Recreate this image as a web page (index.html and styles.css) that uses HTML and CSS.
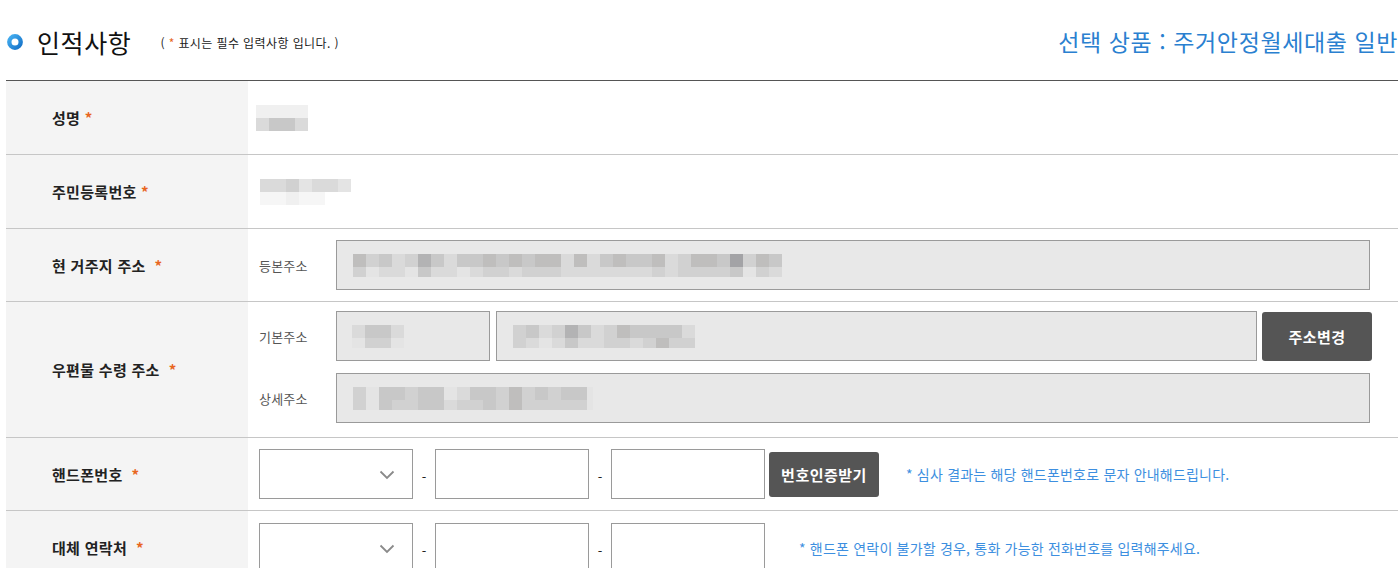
FILE: index.html
```html
<!DOCTYPE html>
<html lang="ko">
<head>
<meta charset="utf-8">
<title>인적사항</title>
<link rel="stylesheet" href="styles.css">
</head>
<body>
<div class="page">
  <header class="head">
    <div class="head-left">
      <svg class="bullet" width="16" height="16" viewBox="0 0 16 16" aria-hidden="true">
        <defs>
          <linearGradient id="bg" x1="0" y1="0" x2="1" y2="1">
            <stop offset="0" stop-color="#44aef0"/>
            <stop offset="1" stop-color="#1673c9"/>
          </linearGradient>
        </defs>
        <circle cx="8" cy="8" r="5.7" fill="none" stroke="url(#bg)" stroke-width="4.4"/>
      </svg>
      <h2 class="title">인적사항</h2>
      <span class="req-note">( <em>*</em> 표시는 필수 입력사항 입니다. )</span>
    </div>
    <div class="product">선택 상품 : 주거안정월세대출 일반</div>
  </header>

  <div class="form">
    <div class="row r1">
      <div class="label">성명 <b class="ast">*</b></div>
      <div class="cell pad-s">
        <div class="mosaic m13">
          <div class="mr"><i class="s1"></i><i class="s1"></i><i class="s1"></i><i class="s1"></i></div>
          <div class="mr"><i class="s3"></i><i class="s5"></i><i class="s5"></i><i class="s3"></i></div>
        </div>
      </div>
    </div>

    <div class="row r2">
      <div class="label">주민등록번호 <b class="ast">*</b></div>
      <div class="cell pad-r">
        <div class="mosaic m13">
          <div class="mr"><i class="s3"></i><i class="s3"></i><i class="s4"></i><i class="s2"></i><i class="s3"></i><i class="s3"></i><i class="s2"></i></div>
          <div class="mr"><i class="s0"></i><i class="s0"></i><i class="s1"></i><i class="s0"></i><i class="s0"></i></div>
        </div>
      </div>
    </div>

    <div class="row r3">
      <div class="label">현 거주지 주소 &nbsp;<b class="ast">*</b></div>
      <div class="cell">
        <div class="line">
          <span class="sub">등본주소</span>
          <div class="box grow">
            <div class="mosaic mx">
              <div class="mr"><i class="s6"></i><i class="s4"></i><i class="s5"></i><i class="s3"></i><i class="s4"></i><i class="s7"></i><i class="s5"></i><i class="s3"></i><i class="s5"></i><i class="s5"></i><i class="s6"></i><i class="s5"></i><i class="s6"></i><i class="s5"></i><i class="s6"></i><i class="s6"></i><i class="s3"></i><i class="s6"></i><i class="s3"></i><i class="s5"></i><i class="s6"></i><i class="s5"></i><i class="s5"></i><i class="s6"></i><i class="s3"></i><i class="s4"></i><i class="s6"></i><i class="s6"></i><i class="s5"></i><i class="s8"></i><i class="s4"></i><i class="s6"></i><i class="s5"></i></div>
              <div class="mr lo"><i class="s4"></i><i class="s2"></i><i class="s3"></i><i class="s3"></i><i class="s2"></i><i class="s5"></i><i class="s3"></i><i class="s3"></i><i class="s2"></i><i class="s3"></i><i class="s4"></i><i class="s4"></i><i class="s3"></i><i class="s4"></i><i class="s4"></i><i class="s4"></i><i class="s3"></i><i class="s3"></i><i class="s3"></i><i class="s3"></i><i class="s3"></i><i class="s3"></i><i class="s3"></i><i class="s4"></i><i class="s3"></i><i class="s4"></i><i class="s4"></i><i class="s4"></i><i class="s4"></i><i class="s5"></i><i class="s2"></i><i class="s4"></i><i class="s3"></i></div>
            </div>
          </div>
        </div>
      </div>
    </div>

    <div class="row r4">
      <div class="label">우편물 수령 주소 &nbsp;<b class="ast">*</b></div>
      <div class="cell col">
        <div class="line">
          <span class="sub">기본주소</span>
          <div class="box zip">
            <div class="mosaic mx">
              <div class="mr"><i class="s3"></i><i class="s5"></i><i class="s5"></i><i class="s3"></i></div>
              <div class="mr lo"><i class="s2"></i><i class="s4"></i><i class="s4"></i><i class="s2"></i></div>
            </div>
          </div>
          <div class="box grow">
            <div class="mosaic mx">
              <div class="mr"><i class="s4"></i><i class="s5"></i><i class="s3"></i><i class="s4"></i><i class="s7"></i><i class="s5"></i><i class="s3"></i><i class="s4"></i><i class="s6"></i><i class="s5"></i><i class="s5"></i><i class="s5"></i><i class="s5"></i><i class="s3"></i></div>
              <div class="mr lo"><i class="s4"></i><i class="s3"></i><i class="s2"></i><i class="s3"></i><i class="s5"></i><i class="s3"></i><i class="s3"></i><i class="s4"></i><i class="s4"></i><i class="s3"></i><i class="s4"></i><i class="s6"></i><i class="s4"></i><i class="s4"></i></div>
            </div>
          </div>
          <button class="btn btn-addr" type="button">주소변경</button>
        </div>
        <div class="line">
          <span class="sub">상세주소</span>
          <div class="box grow">
            <div class="mosaic mx">
              <div class="mr"><i class="s4"></i><i class="s2"></i><i class="s5"></i><i class="s5"></i><i class="s4"></i><i class="s5"></i><i class="s5"></i><i class="s2"></i><i class="s3"></i><i class="s5"></i><i class="s5"></i><i class="s4"></i><i class="s6"></i><i class="s4"></i><i class="s5"></i><i class="s4"></i><i class="s5"></i><i class="s5"></i><i class="s2 half"></i></div>
              <div class="mr lo"><i class="s4"></i><i class="s2"></i><i class="s5"></i><i class="s4"></i><i class="s4"></i><i class="s5"></i><i class="s5"></i><i class="s3"></i><i class="s4"></i><i class="s4"></i><i class="s5"></i><i class="s4"></i><i class="s6"></i><i class="s4"></i><i class="s4"></i><i class="s4"></i><i class="s4"></i><i class="s4"></i><i class="s2 half"></i></div>
            </div>
          </div>
        </div>
      </div>
    </div>

    <div class="row r5">
      <div class="label">핸드폰번호 &nbsp;<b class="ast">*</b></div>
      <div class="cell">
        <div class="phone">
          <div class="select">
            <svg class="chev" width="16" height="10" viewBox="0 0 16 10" aria-hidden="true"><path d="M1.5 1.5 L8 8 L14.5 1.5" fill="none" stroke="#8a8a8a" stroke-width="1.8"/></svg>
          </div>
          <span class="dash">-</span>
          <div class="inp"></div>
          <span class="dash">-</span>
          <div class="inp"></div>
          <button class="btn btn-auth" type="button">번호인증받기</button>
          <span class="hint hint1">* 심사 결과는 해당 핸드폰번호로 문자 안내해드립니다.</span>
        </div>
      </div>
    </div>

    <div class="row r6">
      <div class="label">대체 연락처 &nbsp;<b class="ast">*</b></div>
      <div class="cell top">
        <div class="phone">
          <div class="select">
            <svg class="chev" width="16" height="10" viewBox="0 0 16 10" aria-hidden="true"><path d="M1.5 1.5 L8 8 L14.5 1.5" fill="none" stroke="#8a8a8a" stroke-width="1.8"/></svg>
          </div>
          <span class="dash">-</span>
          <div class="inp"></div>
          <span class="dash">-</span>
          <div class="inp"></div>
          <span class="hint hint2">* 핸드폰 연락이 불가할 경우, 통화 가능한 전화번호를 입력해주세요.</span>
        </div>
      </div>
    </div>
  </div>
</div>
</body>
</html>
```

FILE: styles.css
```css
* { box-sizing: border-box; }
html, body { margin: 0; padding: 0; background: #fff; }
body {
  font-family: "Noto Sans CJK KR", "Noto Sans", sans-serif;
  color: #222;
  width: 1399px;
  height: 568px;
  overflow: hidden;
}
.page { padding-left: 6px; padding-right: 1px; }

.head {
  height: 80px;
  padding-top: 22px;
  display: flex;
  justify-content: space-between;
  align-items: flex-start;
}
.head-left {
  height: 40px;
  display: flex;
  align-items: center;
}
.bullet { display: block; margin-left: 1px; }
.title {
  margin: 0 0 0 14px;
  font-size: 25px;
  font-weight: 400;
  line-height: 40px;
  color: #111;
  letter-spacing: 0.6px;
}
.req-note {
  margin-left: 29px;
  font-size: 12px;
  line-height: 16px;
  color: #222;
  letter-spacing: 0.4px;
  padding-top: 2px;
}
.req-note em { font-style: normal; color: #e8661e; }
.product {
  height: 40px;
  line-height: 38px;
  font-size: 23px;
  color: #2a80d0;
  letter-spacing: 0.6px;
  white-space: nowrap;
}

.form { border-top: 1px solid #555; }
.row {
  display: grid;
  grid-template-columns: 242px 1fr;
  border-bottom: 1px solid #c6c6c6;
}
.r1, .r2 { height: 74px; }
.r3 { height: 73px; }
.r4 { height: 136px; }
.r5 { height: 73px; }
.r6 { height: 80px; border-bottom: 0; }

.label {
  background: #f4f4f4;
  padding-left: 46px;
  display: flex;
  align-items: center;
  font-size: 15px;
  font-weight: 700;
  color: #222;
  white-space: pre;
  letter-spacing: 0.3px;
}
.r6 .label { align-items: flex-start; padding-top: 26px; }
.ast { color: #e8661e; font-weight: 700; margin-left: 0; }

.cell {
  padding-left: 11px;
  padding-right: 28px;
  display: flex;
  align-items: center;
}
.cell.pad-s { padding-left: 8px; }
.cell.pad-r { padding-left: 12px; }
.cell.col {
  flex-direction: column;
  align-items: stretch;
  justify-content: flex-start;
  padding-top: 9px;
  gap: 12px;
}
.cell.top { align-items: flex-start; padding-top: 12px; }

.line { display: flex; align-items: center; width: 100%; }
.sub {
  width: 77px;
  flex: none;
  font-size: 13px;
  color: #555;
  letter-spacing: 0.2px;
}
.box {
  height: 50px;
  background: #e8e8e8;
  border: 1px solid #9a9a9a;
  display: flex;
  align-items: center;
  padding-left: 16px;
}
.box.grow { flex: 1; }
.box.zip { width: 154px; flex: none; margin-right: 6px; padding-left: 15px; }
.btn {
  flex: none;
  width: 110px;
  border: 0;
  border-radius: 3px;
  background: #555;
  color: #fff;
  font-family: inherit;
  font-size: 15px;
  font-weight: 700;
  letter-spacing: 0.5px;
  padding: 0;
  cursor: pointer;
}
.btn-addr { height: 49px; margin-left: 5px; margin-right: -2px; }
.btn-auth { height: 45px; margin-left: 4px; }

.mosaic { display: flex; flex-direction: column; }
.mr { display: flex; }
.mr i { display: block; width: 13px; height: 13px; }
.mx .mr.lo i { height: 10px; }
.mr i.half { width: 6px; }
.m13 .mr i { height: 13px; }
.s0 { background: #f6f6f6; }
.s1 { background: #f0f0f0; }
.s2 { background: #e4e4e4; }
.s3 { background: #dadada; }
.s4 { background: #d1d1d1; }
.s5 { background: #c8c8c8; }
.s6 { background: #bfbebd; }
.s7 { background: #b3b3b4; }
.s8 { background: #a3a3a6; }

.phone { display: flex; align-items: center; }
.select, .inp {
  width: 154px;
  height: 50px;
  border: 1px solid #9a9a9a;
  background: #fff;
  flex: none;
}
.select { position: relative; }
.chev { position: absolute; right: 17px; top: 20px; }
.dash {
  width: 22px;
  text-align: center;
  font-size: 13px;
  color: #222;
  padding-top: 4px;
}
.hint {
  font-size: 14px;
  color: #3d8fe0;
  letter-spacing: 0.2px;
  white-space: nowrap;
}
.hint1 { margin-left: 27px; }
.hint2 { margin-left: 34px; }
```
